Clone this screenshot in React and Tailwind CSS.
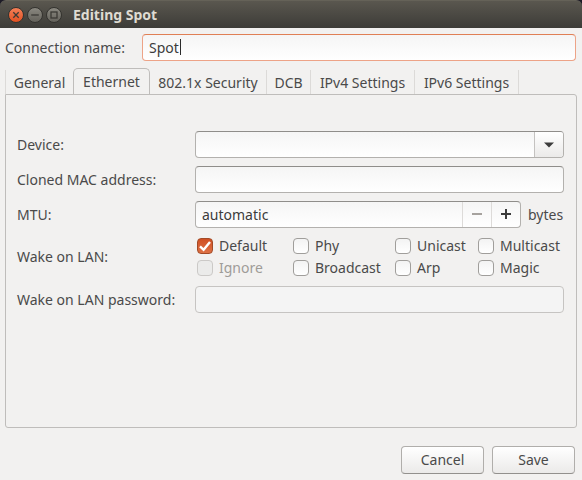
import React, { useState } from "react";

const FIELD =
  "h-[27px] w-full rounded border border-[#b3b1ae] border-t-[#8f8d8a] bg-linear-to-b from-[#f5f5f5] to-white px-1.5 leading-5 text-[#3c3c3c] outline-none";

const TABS = [
  { name: "General", width: "w-[68px]" },
  { name: "Ethernet", width: "w-[77px]" },
  { name: "802.1x Security", width: "w-[117px]" },
  { name: "DCB", width: "w-[44px]" },
  { name: "IPv4 Settings", width: "w-[104px]" },
  { name: "IPv6 Settings", width: "w-[104px]" },
];

const WAKE_OPTIONS = [
  { name: "Default", checked: true },
  { name: "Phy" },
  { name: "Unicast" },
  { name: "Multicast" },
  { name: "Ignore", disabled: true },
  { name: "Broadcast" },
  { name: "Arp" },
  { name: "Magic" },
];

function WindowButton({ label, close, children }) {
  return (
    <button
      type="button"
      aria-label={label}
      className={`size-4 rounded-full border border-[#34332f] ${
        close
          ? "bg-linear-to-b from-[#f37f56] to-[#e2501f]"
          : "bg-linear-to-b from-[#8a8880] to-[#64625b]"
      }`}
    >
      <svg viewBox="0 0 14 14" className="size-3.5" fill="none" stroke="#3b3a35" strokeWidth="1.3">
        {children}
      </svg>
    </button>
  );
}

function TitleBar() {
  return (
    <div className="bg-[#1d1b26]">
      <header className="flex h-7 items-center gap-[3px] rounded-t-md border-t border-[#656258] bg-linear-to-b from-[#5a574f] to-[#3d3c38] px-2">
        <WindowButton label="Close" close>
          <path d="M4.3 4.3l5.4 5.4M9.7 4.3l-5.4 5.4" />
        </WindowButton>
        <WindowButton label="Minimize">
          <path d="M3.2 7h7.6" />
        </WindowButton>
        <WindowButton label="Maximize">
          <rect x="4" y="4" width="6" height="6" />
        </WindowButton>
        <h1 className="ml-2 font-bold text-[#dfdbd2]">Editing Spot</h1>
      </header>
    </div>
  );
}

function Tabs({ active, onSelect }) {
  return (
    <div role="tablist" className="-mb-px flex h-[27px] items-end">
      {TABS.map((tab) => {
        const selected = tab.name === active;
        return (
          <button
            key={tab.name}
            type="button"
            role="tab"
            aria-selected={selected}
            onClick={() => onSelect(tab.name)}
            className={`${tab.width} shrink-0 whitespace-nowrap ${
              selected
                ? "h-[27px] rounded-t-[5px] border border-b-0 border-[#bfbdbb] bg-[#f2f1f0]"
                : "mb-px h-6 border-r border-[#dcdad8] pt-0.5 first:border-r-0 first:border-l"
            }`}
          >
            {tab.name}
          </button>
        );
      })}
    </div>
  );
}

function Row({ label, htmlFor, children }) {
  return (
    <div className="flex items-center">
      <label htmlFor={htmlFor} className="w-[178px] shrink-0">
        {label}
      </label>
      <div className="flex min-w-0 flex-1 items-center">{children}</div>
    </div>
  );
}

function Check({ name, checked = false, disabled = false }) {
  return (
    <label className={`flex items-center gap-1.5 ${disabled ? "text-[#9f9c98]" : ""}`}>
      <span className="grid size-4 shrink-0 place-items-center">
        <input
          type="checkbox"
          defaultChecked={checked}
          disabled={disabled}
          className="peer col-start-1 row-start-1 size-4 appearance-none rounded-[4px] border border-[#a09e9b] bg-linear-to-b from-[#f3f3f3] to-white checked:border-[#a34a26] checked:from-[#cf4f22] checked:to-[#de7145] disabled:border-[#cbc9c7] disabled:from-[#ebebea] disabled:to-[#ebebea]"
        />
        <svg
          viewBox="0 0 16 16"
          className="pointer-events-none invisible col-start-1 row-start-1 size-4 peer-checked:visible"
          fill="none"
          stroke="white"
          strokeWidth="2.4"
        >
          <path d="M3 8.3l3.6 3.5L13 4" />
        </svg>
      </span>
      {name}
    </label>
  );
}

function SpinButton({ label, disabled, children }) {
  return (
    <button
      type="button"
      aria-label={label}
      disabled={disabled}
      className={`grid w-[29px] place-items-center border-l border-[#dddbd9] pb-px ${
        disabled ? "text-[#a6a29e]" : "text-[#3c3c3c]"
      }`}
    >
      <svg viewBox="0 0 10 10" className="size-2.5" fill="none" stroke="currentColor" strokeWidth="2">
        {children}
      </svg>
    </button>
  );
}

function ActionButton({ children }) {
  return (
    <button
      type="button"
      className="h-7 w-[83px] rounded border border-[#b0aeab] border-b-[#92908d] bg-linear-to-b from-white to-[#ebeae9]"
    >
      {children}
    </button>
  );
}

export default function App() {
  const [tab, setTab] = useState("Ethernet");
  return (
    <div className="flex min-h-screen flex-col bg-[#f2f1f0] font-['Noto_Sans','Open_Sans',sans-serif] text-sm text-[#4a4a4a]">
      <TitleBar />
      <main className="flex flex-1 flex-col px-[5px] pt-1.5 pb-1.5">
        <div className="flex items-center pr-px">
          <label htmlFor="connection" className="w-[137px] shrink-0">
            Connection name:
          </label>
          <div className="relative flex-1">
            <input
              id="connection"
              defaultValue="Spot"
              className="h-[27px] w-full rounded border border-[#eda387] border-t-[#e07f55] bg-linear-to-b from-[#f5f5f5] to-white px-1.5 leading-5 text-[#3c3c3c] outline-none"
            />
            <span className="pointer-events-none absolute top-[5px] left-[38px] h-4 w-px bg-[#2b2b2b]" />
          </div>
        </div>

        <div className="mt-[7px] flex flex-1 flex-col">
          <Tabs active={tab} onSelect={setTab} />
          <section
            role="tabpanel"
            className="flex flex-1 flex-col gap-2 rounded-b-[3px] rounded-tr-[3px] border border-[#bfbdbb] pt-9 pr-3 pb-3 pl-[11px]"
          >
            <Row label="Device:" htmlFor="device">
              <div className="relative flex-1">
                <select id="device" className={`${FIELD} block appearance-none`} />
                <span className="pointer-events-none absolute inset-y-px right-px grid w-[29px] place-items-center rounded-r-[3px] border-l border-[#c4c2c0] bg-linear-to-b from-white to-[#ebeae9]">
                  <svg viewBox="0 0 10 6" className="h-1.5 w-2.5" fill="#3c3c3c">
                    <path d="M0 0.5h10L5 5.5z" />
                  </svg>
                </span>
              </div>
            </Row>
            <Row label="Cloned MAC address:" htmlFor="mac">
              <input id="mac" className={FIELD} />
            </Row>
            <Row label="MTU:" htmlFor="mtu">
              <div className="flex h-[27px] flex-1 rounded border border-[#b3b1ae] border-t-[#8f8d8a] bg-linear-to-b from-[#f5f5f5] to-white">
                <input
                  id="mtu"
                  defaultValue="automatic"
                  className="min-w-0 flex-1 px-1.5 leading-5 text-[#3c3c3c] outline-none"
                />
                <SpinButton label="Decrease" disabled>
                  <path d="M0 5h10" />
                </SpinButton>
                <SpinButton label="Increase">
                  <path d="M0 5h10M5 0v10" />
                </SpinButton>
              </div>
              <span className="w-[43px] pl-[7px]">bytes</span>
            </Row>
            <div role="group" aria-labelledby="wake-label" className="flex items-center">
              <span id="wake-label" className="w-[178px] shrink-0">
                Wake on LAN:
              </span>
              <div className="grid flex-1 grid-cols-[96px_102px_83px_1fr] gap-y-0.5 pl-0.5">
                {WAKE_OPTIONS.map((option) => (
                  <Check key={option.name} {...option} />
                ))}
              </div>
            </div>
            <Row label="Wake on LAN password:" htmlFor="password">
              <input
                id="password"
                type="password"
                disabled
                className="h-[27px] w-full rounded border border-[#c6c4c2] bg-[#f4f4f4] px-1.5"
              />
            </Row>
          </section>
        </div>

        <footer className="mt-[18px] flex justify-end gap-2 pr-0.5">
          <ActionButton>Cancel</ActionButton>
          <ActionButton>Save</ActionButton>
        </footer>
      </main>
    </div>
  );
}
